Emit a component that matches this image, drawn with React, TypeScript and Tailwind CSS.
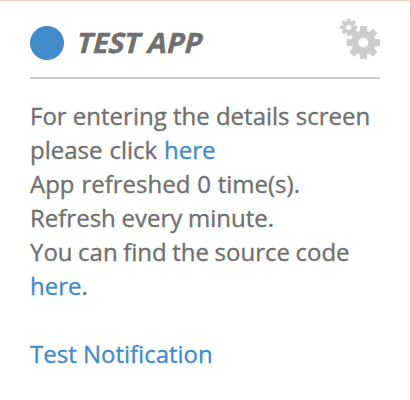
const ANGLES = [0, 45, 90, 135];

function Gears() {
  return (
    <svg className="h-[41px] w-[41px] shrink-0" viewBox="339 18 41 41" fill="#cccccc" aria-hidden="true">
      <g transform="translate(363.4 42.6)">
        {ANGLES.map((a) => (
          <rect key={a} x="-3.5" y="-16.6" width="7" height="33.2" transform={`rotate(${a})`} />
        ))}
        <circle r="12.2" />
        <circle r="4.9" fill="white" />
      </g>
      <g transform="translate(348.7 27.3)">
        {ANGLES.map((a) => (
          <rect key={a} x="-1.8" y="-8.5" width="3.6" height="17" transform={`rotate(${a})`} />
        ))}
        <circle r="6.2" />
        <circle r="2.6" fill="white" />
      </g>
    </svg>
  );
}

export default function App() {
  return (
    <div className="h-[400px] w-[411px] overflow-hidden border-t border-r border-t-[#ecd3b1] border-r-[#dec7a2] bg-white pr-[30px] pl-[30px] pt-[17px] font-['Open_Sans',sans-serif] text-[#707070]">
      <header className="flex h-[61px] items-start border-b-2 border-[#cacaca]">
        <div className="mt-[8px] h-[34px] w-[34px] shrink-0 rounded-full bg-[#428bca]" />
        <div className="flex-1">
          <h1 className="mt-[7px] ml-[11.3px] w-fit origin-[0_28px] -skew-x-[14deg] text-[28px] leading-[34px] font-bold whitespace-nowrap [-webkit-text-stroke:0.5px_currentColor]">TEST APP</h1>
        </div>
        <Gears />
      </header>
      <main className="mt-[20px] text-[24px] leading-[34px] whitespace-nowrap [-webkit-text-stroke:0.35px_currentColor]">
        <p>For entering the details screen</p>
        <p className="[word-spacing:0.7px]">please click <a className="text-[#428bca]">here</a></p>
        <p className="[word-spacing:0.6px]">App refreshed 0 time(s).</p>
        <p className="[word-spacing:-0.5px]">Refresh every minute.</p>
        <p className="[word-spacing:-0.7px]">You can find the source code</p>
        <p><a className="text-[#428bca]">here</a>.</p>
        <p className="mt-[34px]"><a className="text-[#428bca]">Test Notification</a></p>
      </main>
    </div>
  );
}
